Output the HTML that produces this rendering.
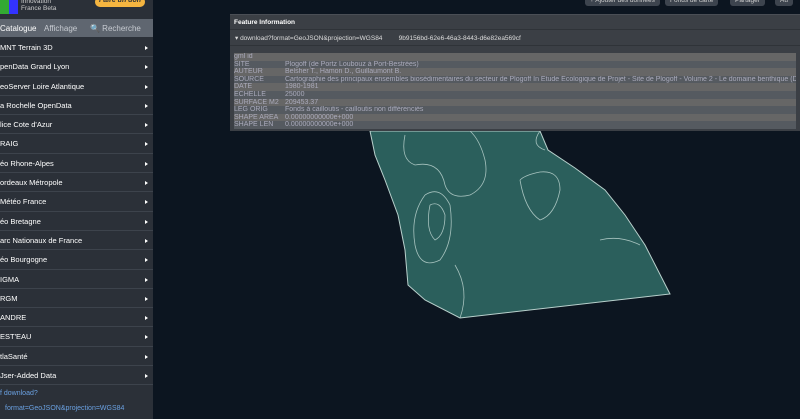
<!DOCTYPE html>
<html><head><style>
*{margin:0;padding:0;box-sizing:border-box}
body{width:800px;height:419px;overflow:hidden;background:#0c1520;font-family:"Liberation Sans",sans-serif;position:relative}
#side{position:absolute;left:0;top:0;width:153px;height:419px;background:#2b3038}
#top{height:19px;background:#2b3038;position:relative}
#tabs{height:18px;background:#5f6670;display:flex;align-items:center;font-size:8px;color:#c8ccd2}
.it{height:19.3px;border-bottom:1px solid #3d434c;color:#fff;font-size:7.5px;line-height:19px;padding-left:0;position:relative}
.it:after{content:"";position:absolute;right:5px;top:8px;border-left:3px solid #fff;border-top:2px solid transparent;border-bottom:2px solid transparent}
#panel{position:absolute;left:230px;top:14px;width:570px;height:117px;background:#3b3f45;border-top:1px solid #4a4e55;overflow:hidden}
.btn{position:absolute;top:-4px;height:10px;background:#3d444e;border-radius:3px;font-size:6.5px;color:#ccc;padding:1px 5px}
table{table-layout:fixed;border-collapse:collapse;font-size:7px;color:#aab;line-height:7.6px;width:566px;white-space:nowrap}
td{overflow:hidden}
</style></head><body>
<svg style="position:absolute;left:0;top:0" width="800" height="419">
<path d="M370,131 L540,131 L548,150 L575,168 L605,190 L625,215 L645,245 L670,294 L460,318 L425,300 L408,285 L405,250 L398,215 L385,180 L375,155 Z" fill="#2b5f5c" stroke="#b8d0cc" stroke-width="1"/>
<g fill="none" stroke="#a6c2be" stroke-width="0.8">
<path d="M405,135 Q400,160 415,165 Q440,160 445,185 Q450,200 470,195 Q490,185 485,160 Q480,140 470,131"/>
<path d="M520,180 Q525,175 540,172 Q560,170 560,190 Q555,215 540,220 Q525,210 520,180"/>
<path d="M425,195 Q440,185 450,205 Q455,240 440,260 Q420,270 415,245 Q410,215 425,195"/>
<path d="M430,205 Q440,200 445,215 Q445,235 435,240 Q425,230 430,205"/>
<path d="M455,265 Q470,290 460,318"/>
<path d="M600,240 Q620,235 640,245"/>
<path d="M540,131 Q530,145 545,150"/>
</g></svg>
<div id="side">
<div id="top"><div style="position:absolute;left:0;top:0;width:18px;height:14px;background:linear-gradient(90deg,#3a3 50%,#33f 50%)"></div>
<div style="position:absolute;left:21px;top:-2px;font-size:6.5px;color:#ccc;line-height:7px">Innovation<br>France Beta</div>
<div style="position:absolute;left:95px;top:-3px;width:50px;height:10px;background:#f5b540;border-radius:5px;font-size:7px;color:#333;text-align:center;font-weight:bold;font-style:italic">Faire un don</div></div>
<div id="tabs"><span style="color:#fff;width:42px">Catalogue</span><span style="width:45px;margin-left:2px">Affichage</span><span style="margin-left:1px">🔍 Recherche</span></div>
<div style="padding-top:1px">
<div class="it">MNT Terrain 3D</div><div class="it">penData Grand Lyon</div><div class="it">eoServer Loire Atlantique</div><div class="it">a Rochelle OpenData</div><div class="it">lice Cote d'Azur</div><div class="it">RAIG</div><div class="it">éo Rhone-Alpes</div><div class="it">ordeaux Métropole</div><div class="it">Météo France</div><div class="it">éo Bretagne</div><div class="it">arc Nationaux de France</div><div class="it">éo Bourgogne</div><div class="it">IGMA</div><div class="it">RGM</div><div class="it">ANDRE</div><div class="it">EST'EAU</div><div class="it">tlaSanté</div><div class="it">Jser-Added Data</div>
</div>
<div style="position:absolute;top:390px;left:0;font-size:7px;color:#6aa0e0">f download?</div>
<div style="position:absolute;top:405px;left:5px;font-size:7px;color:#6aa0e0">format=GeoJSON&amp;projection=WGS84</div>
</div>
<div class="btn" style="left:585px">+ Ajouter des données</div>
<div class="btn" style="left:665px">Fonds de carte</div>
<div class="btn" style="left:730px">Partager</div>
<div class="btn" style="left:775px">Au</div>
<div id="panel">
<div style="font-size:6.5px;color:#fff;font-weight:bold;padding:4px 4px;height:15px;border-bottom:1px solid #2f3338">Feature Information</div>
<div style="font-size:6.5px;color:#ddd;padding:4px 5px;height:16px;border-bottom:1px solid #2f3338">▾ download?format=GeoJSON&amp;projection=WGS84 &nbsp;&nbsp;&nbsp;&nbsp;&nbsp;&nbsp;&nbsp; 9b9156bd-62e6-46a3-8443-d6e82ea569cf</div>
<div style="margin:7px 4px 0;background:#555a60;overflow:hidden">
<table>
<colgroup><col style="width:51px"><col></colgroup>
<tr style="background:#666"><td>gml id</td><td></td></tr>
<tr><td>SITE</td><td>Plogoff (de Portz Loubouz à Port-Bestrées)</td></tr>
<tr style="background:#666"><td>AUTEUR</td><td>Belsher T., Hamon D., Guillaumont B.</td></tr>
<tr><td>SOURCE</td><td>Cartographie des principaux ensembles biosédimentaires du secteur de Plogoff In Etude Ecologique de Projet - Site de Plogoff - Volume 2 - Le domaine benthique (DERO</td></tr>
<tr style="background:#666"><td>DATE</td><td>1980-1981</td></tr>
<tr><td>ECHELLE</td><td>25000</td></tr>
<tr style="background:#666"><td>SURFACE M2</td><td>209453.37</td></tr>
<tr><td>LEG ORIG</td><td>Fonds à cailloutis - cailloutis non différenciés</td></tr>
<tr style="background:#666"><td>SHAPE AREA</td><td>0.00000000000e+000</td></tr>
<tr><td>SHAPE LEN</td><td>0.00000000000e+000</td></tr>
</table></div></div>
</body></html>
